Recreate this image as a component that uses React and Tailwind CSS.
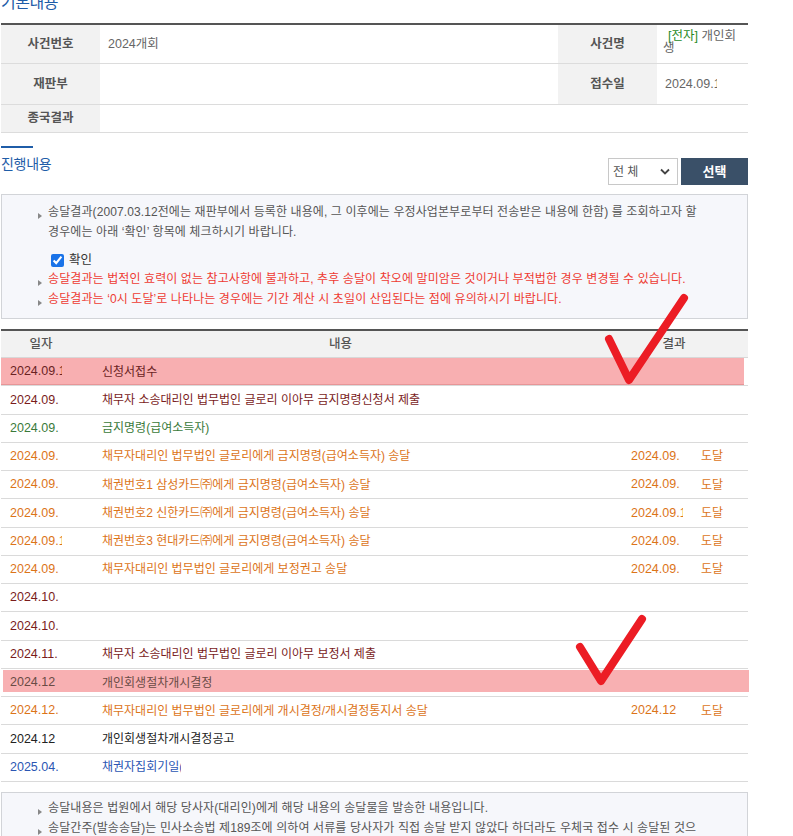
import React from "react";

const FONT = "font-['Liberation_Sans','Noto_Sans_CJK_KR',sans-serif]";
const ORANGE = "text-[#dc7419]";
const MAROON = "text-[#7a1c1c]";

const ROWS = [
  { d: "2024.09.", dx: true, c: "신청서접수", col: "text-[#6a2323]", pink: "a" },
  { d: "2024.09.", c: "채무자 소송대리인 법무법인 글로리 이아무 금지명령신청서 제출", col: MAROON },
  { d: "2024.09.", c: "금지명령(급여소득자)", col: "text-[#3a7a3a]" },
  { d: "2024.09.", c: "채무자대리인 법무법인 글로리에게 금지명령(급여소득자) 송달", col: ORANGE, rd: "2024.09.", st: "도달" },
  { d: "2024.09.", c: "채권번호1 삼성카드㈜에게 금지명령(급여소득자) 송달", col: ORANGE, rd: "2024.09.", st: "도달" },
  { d: "2024.09.", c: "채권번호2 신한카드㈜에게 금지명령(급여소득자) 송달", col: ORANGE, rd: "2024.09.", rdx: true, st: "도달" },
  { d: "2024.09.", dx: true, c: "채권번호3 현대카드㈜에게 금지명령(급여소득자) 송달", col: ORANGE, rd: "2024.09.", st: "도달" },
  { d: "2024.09.", c: "채무자대리인 법무법인 글로리에게 보정권고 송달", col: ORANGE, rd: "2024.09.", st: "도달" },
  { d: "2024.10.", c: "", col: MAROON },
  { d: "2024.10.", c: "", col: MAROON },
  { d: "2024.11.", c: "채무자 소송대리인 법무법인 글로리 이아무 보정서 제출", col: MAROON },
  { d: "2024.12", c: "개인회생절차개시결정", col: "text-[#6a4b45]", pink: "b" },
  { d: "2024.12.", c: "채무자대리인 법무법인 글로리에게 개시결정/개시결정통지서 송달", col: ORANGE, rd: "2024.12", st: "도달" },
  { d: "2024.12", c: "개인회생절차개시결정공고", col: "text-[#222222]" },
  { d: "2025.04.", c: "채권자집회기일", col: "text-[#2b56b3]", tail: true },
];

function Clipped({ text, extra }) {
  if (!extra) return <span>{text}</span>;
  return (
    <span className="inline-block w-[52px] overflow-hidden whitespace-nowrap align-top">
      {text}1
    </span>
  );
}

function Bullet() {
  return (
    <span className="inline-block w-0 h-0 border-y-[3px] border-y-transparent border-l-[4px] border-l-[#888] mr-[6px] align-[-3px]" />
  );
}

export default function App() {
  return (
    <div className={`w-[793px] h-[836px] overflow-hidden relative bg-white ${FONT}`}>
      <div className="ml-[1px] w-[747px]">
        {/* 기본내용 title (cut off) */}
        <div className="h-[23px] overflow-hidden">
          <div className="mt-[-7px] text-[16px] leading-[20px] tracking-[-0.5px] text-[#1f5da8]">기본내용</div>
        </div>

        {/* Basic info table */}
        <div className="border-t-2 border-[#555]">
          <div className="h-[39px] flex border-b border-[#dcdcdc]">
            <div className="w-[99px] bg-[#f2f2f2] flex items-center justify-center text-[12.5px] font-semibold text-[#555]">사건번호</div>
            <div className="w-[458px] flex items-center pl-[8px] text-[12.5px] text-[#666]">2024개회</div>
            <div className="w-[99px] bg-[#f2f2f2] flex items-center justify-center text-[12.5px] font-semibold text-[#555]">사건명</div>
            <div className="w-[91px] pl-[6px] pr-[8px] pt-[5px] text-[12.5px] leading-[12px] text-[#666]">
              <span className="pl-[5px] text-[#1f8a1f]">[전자]</span> 개인회생
            </div>
          </div>
          <div className="h-[41px] flex border-b border-[#dcdcdc]">
            <div className="w-[99px] bg-[#f2f2f2] flex items-center justify-center text-[12.5px] font-semibold text-[#555]">재판부</div>
            <div className="w-[458px]" />
            <div className="w-[99px] bg-[#f2f2f2] flex items-center justify-center text-[12.5px] font-semibold text-[#555]">접수일</div>
            <div className="w-[91px] flex items-center pl-[8px] text-[12.5px] text-[#666]">
              <Clipped text="2024.09." extra />
            </div>
          </div>
          <div className="h-[28px] flex border-b border-[#dcdcdc]">
            <div className="w-[99px] bg-[#f2f2f2] flex items-center justify-center text-[12.5px] font-semibold text-[#555]">종국결과</div>
            <div className="flex-1" />
          </div>
        </div>

        {/* 진행내용 header */}
        <div className="mt-[13px] h-[2px] w-[32px] bg-[#1f5da8]" />
        <div className="h-[46px] flex justify-between items-start">
          <div className="mt-[6px] text-[14px] leading-[20px] tracking-[-0.3px] text-[#1f5da8]">진행내용</div>
          <div className="mt-[10px] flex gap-[3px]">
            <div className="w-[70px] h-[27px] border border-[#c8c8c8] bg-white flex items-center justify-between pl-[4px] pr-[7px] text-[12px] text-[#555]">
              <span>전 체</span>
              <svg width="10" height="7" viewBox="0 0 10 7">
                <path d="M1 1.5 L5 5.5 L9 1.5" fill="none" stroke="#444" strokeWidth="1.8" />
              </svg>
            </div>
            <div className="w-[67px] h-[27px] bg-[#3a5068] flex items-center justify-center text-[13px] font-bold text-white">선택</div>
          </div>
        </div>

        {/* Notice box */}
        <div className="h-[125px] border border-[#d2d4d8] bg-[#f6f7fb] pt-[7px] pl-[36px] text-[12px] tracking-[0.1px]">
          <div className="leading-[20px] text-[#555]">
            <Bullet />송달결과(2007.03.12전에는 재판부에서 등록한 내용에, 그 이후에는 우정사업본부로부터 전송받은 내용에 한함) 를 조회하고자 할
            <br />
            <span className="pl-[10px]">경우에는 아래 ‘확인’ 항목에 체크하시기 바랍니다.</span>
          </div>
          <div className="mt-[8px] h-[20px] flex items-center pl-[13px] gap-[5px] text-[#333]">
            <input type="checkbox" defaultChecked className="w-[13px] h-[13px] m-0 accent-[#1a73e8]" />
            <span className="text-[12.5px]">확인</span>
          </div>
          <div className="leading-[19.5px] text-[#ee3b33]">
            <div><Bullet />송달결과는 법적인 효력이 없는 참고사항에 불과하고, 추후 송달이 착오에 말미암은 것이거나 부적법한 경우 변경될 수 있습니다.</div>
            <div><Bullet />송달결과는 ‘0시 도달’로 나타나는 경우에는 기간 계산 시 초일이 산입된다는 점에 유의하시기 바랍니다.</div>
          </div>
        </div>

        {/* Progress table */}
        <div className="mt-[10px] border-t-2 border-[#555]">
          <div className="h-[27px] bg-[#f2f2f2] border-b border-[#d8d8d8] grid grid-cols-[80px_519px_148px] items-center text-[12.5px] font-medium text-[#555]">
            <div className="text-center">일자</div>
            <div className="text-center">내용</div>
            <div className="text-center">결과</div>
          </div>
          {ROWS.map((r, i) => (
            <div key={i} className="relative h-[28.27px] border-b border-[#dadada]">
              {r.pink === "a" && <div className="absolute left-0 right-[4px] top-0 bottom-0 bg-[#f8afb1] border-b border-[#e79597]" />}
              {r.pink === "b" && <div className="absolute left-[2px] right-[-1px] top-[1px] bottom-[4px] bg-[#f8b0b2]" />}
              <div className={`relative h-full grid grid-cols-[101px_529px_70px_47px] items-center ${r.col}`}>
                <div className="pl-[9px] text-[12.5px] whitespace-nowrap">
                  <Clipped text={r.d} extra={r.dx} />
                </div>
                <div className="text-[12px] whitespace-nowrap">
                  {r.c}
                  {r.tail && <span className="inline-block w-[2px] overflow-hidden align-top">(</span>}
                </div>
                <div className="text-[12.5px] whitespace-nowrap">
                  {r.rd && <Clipped text={r.rd} extra={r.rdx} />}
                </div>
                <div className="text-[12px]">{r.st}</div>
              </div>
            </div>
          ))}
        </div>

        {/* Bottom notice */}
        <div className="mt-[10px] h-[80px] border border-[#d2d4d8] bg-[#f6f7fb] pt-[5px] pl-[36px] text-[12px] tracking-[0.1px] leading-[20px] text-[#555]">
          <div><Bullet />송달내용은 법원에서 해당 당사자(대리인)에게 해당 내용의 송달물을 발송한 내용입니다.</div>
          <div>
            <Bullet />송달간주(발송송달)는 민사소송법 제189조에 의하여 서류를 당사자가 직접 송달 받지 않았다 하더라도 우체국 접수 시 송달된 것으
            <br />
            <span className="pl-[10px]">로 보는 것입니다.</span>
          </div>
        </div>
      </div>

      {/* Red check mark annotations */}
      <svg className="absolute left-0 top-0 pointer-events-none" width="793" height="836" viewBox="0 0 793 836">
        <polyline points="609,339 629,380 684,298" fill="none" stroke="#ec1c24" strokeWidth="8" strokeLinecap="round" strokeLinejoin="round" />
        <polyline points="580,647 601,681 642,619" fill="none" stroke="#ec1c24" strokeWidth="8" strokeLinecap="round" strokeLinejoin="round" />
      </svg>
    </div>
  );
}
